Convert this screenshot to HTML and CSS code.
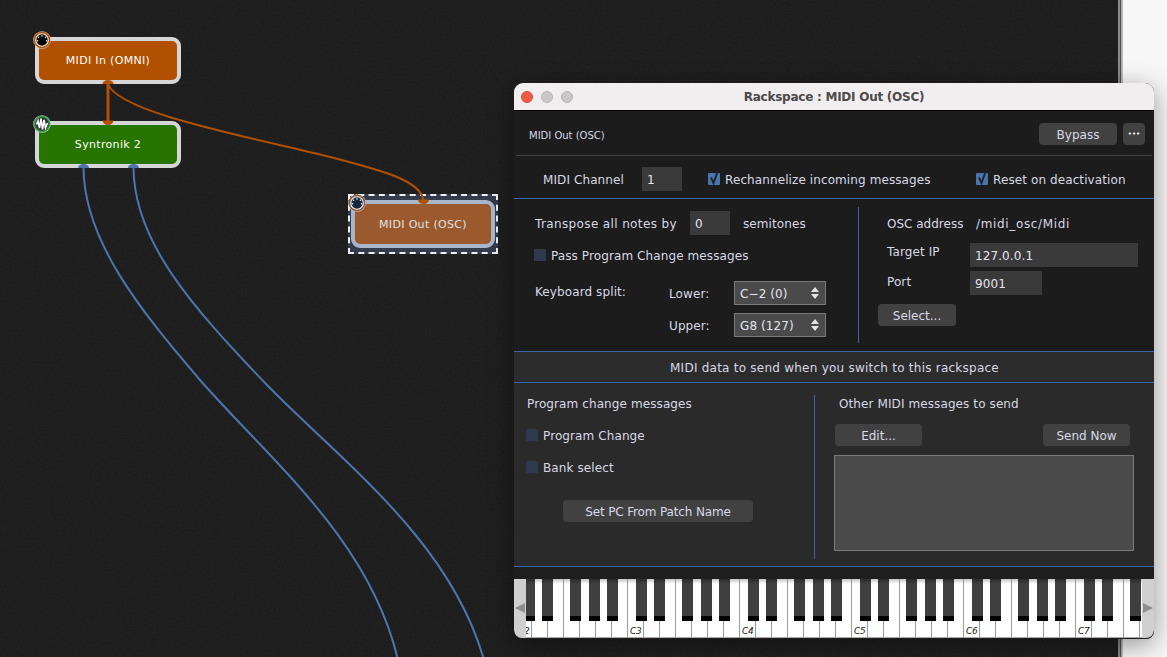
FILE: index.html
```html
<!DOCTYPE html>
<html lang="en">
<head>
<meta charset="utf-8">
<title>Rackspace : MIDI Out (OSC)</title>
<link rel="stylesheet" href="styles.css">
</head>
<body>
<svg class="defs" width="0" height="0" aria-hidden="true">
  <filter id="grain" x="0" y="0" width="100%" height="100%">
    <feTurbulence type="fractalNoise" baseFrequency=".75" numOctaves="2" seed="4"/>
    <feColorMatrix values="0 0 0 0 1  0 0 0 0 1  0 0 0 0 1  1.2 0 0 0 -.5"/>
  </filter>
  <symbol id="midi" viewBox="0 0 18 18">
    <circle cx="9" cy="9" r="8.8" fill="#d0d0d0"/>
    <circle cx="9" cy="9" r="7.6" fill="#f2f2f2" stroke="currentColor" stroke-width="1.500"/>
    <circle cx="9" cy="9" r="5.700" fill="var(--disc, #000)"/>
    <g fill="#fff">
      <circle cx="9" cy="5" r=".8"/><circle cx="5.600" cy="6.300" r=".8"/><circle cx="12.400" cy="6.300" r=".8"/>
      <circle cx="4.500" cy="9.800" r=".8"/><circle cx="13.500" cy="9.800" r=".8"/>
    </g>
  </symbol>
  <symbol id="wave" viewBox="0 0 18 18">
    <circle cx="9" cy="9" r="8.8" fill="#d0d0d0"/>
    <circle cx="9" cy="9" r="7.600" fill="#3b3b3b" stroke="#3a9a4a" stroke-width="1.500"/>
    <path d="M3.500 9.500 5 6 6.500 13 8 3.500 9.500 14.500 11 5 12.500 13 14.500 8" fill="none" stroke="#fff" stroke-width="1.600"/>
  </symbol>
  <symbol id="tick" viewBox="0 0 12 14">
    <rect y="2" width="12" height="12" rx="1" fill="#4a74ab"/>
    <path d="M3 6.500 5.500 12 9.500 1" fill="none" stroke="#20242c" stroke-width="2"/>
  </symbol>
  <symbol id="updown" viewBox="0 0 8 12">
    <path d="M4 0 8 5H0ZM0 7H8L4 12Z" fill="#e4e4e4"/>
  </symbol>
</svg>

<div class="desktop">
  <main class="canvas">
    <svg class="grain" width="1118" height="657" aria-hidden="true"><rect width="1118" height="657" filter="url(#grain)"/></svg>

    <div class="node node-in">
      <svg class="badge badge-orange"><use href="#midi"/></svg>
      MIDI In (OMNI)
    </div>
    <div class="node node-syn">
      <svg class="badge"><use href="#wave"/></svg>
      Syntronik 2
    </div>
    <div class="selection">
      <div class="node node-out">
        <svg class="badge badge-orange badge-selected"><use href="#midi"/></svg>
        MIDI Out (OSC)
      </div>
    </div>

    <svg class="wires" width="1118" height="657" viewBox="0 0 1118 657" aria-hidden="true">
      <g class="wire-blue">
        <path d="M83.500 167C83.500 240 140 310 200 380C270 460 370 540 398 660"/>
        <path d="M133.500 167C133.500 240 190 305 267 385C340 460 450 540 484 660"/>
      </g>
      <g class="port-blue">
        <path d="M78 168a5.500 4 0 0 1 11 0Z"/>
        <path d="M128 168a5.500 4 0 0 1 11 0Z"/>
      </g>
      <g class="wire-orange">
        <path class="thick" d="M108 84V121"/>
        <path d="M108 84C118 112 240 135 330 157C380 170 420 180 423.500 200"/>
      </g>
      <g class="port-orange">
        <path d="M102.500 84a5.500 4 0 0 1 11 0Z"/>
        <path d="M102.500 120.500a5.500 4.500 0 0 0 11 0Z"/>
        <path d="M418 199.500a5.500 4.500 0 0 0 11 0Z"/>
      </g>
    </svg>
  </main>
  <div class="edge"></div>
  <div class="backdrop"></div>

  <section class="window">
    <header class="titlebar">
      <span class="light light-red"></span>
      <span class="light"></span>
      <span class="light"></span>
      <h1 class="title">Rackspace : MIDI Out (OSC)</h1>
    </header>

    <div class="head">
      <span class="plugin-name">MIDI Out (OSC)</span>
      <button class="btn btn-bypass">Bypass</button>
      <button class="btn btn-more">•••</button>
    </div>

    <div class="channel">
      <span class="channel-label">MIDI Channel</span>
      <span class="field field-40">1</span>
      <label class="check check-wide"><svg class="tick"><use href="#tick"/></svg>Rechannelize incoming messages</label>
      <label class="check"><svg class="tick"><use href="#tick"/></svg>Reset on deactivation</label>
    </div>

    <div class="routing">
      <div class="route-left">
        <div class="row">
          <span class="transpose-label">Transpose all notes by</span>
          <span class="field field-40">0</span>
          <span class="semis">semitones</span>
        </div>
        <label class="check check-pass"><span class="box"></span>Pass Program Change messages</label>
        <div class="split">
          <span class="split-label">Keyboard split:</span>
          <span class="split-sub">Lower:</span>
          <span class="select">C−2 (0)<svg class="updown"><use href="#updown"/></svg></span>
          <span class="split-spacer"></span>
          <span class="split-sub">Upper:</span>
          <span class="select">G8 (127)<svg class="updown"><use href="#updown"/></svg></span>
        </div>
      </div>
      <div class="vline"></div>
      <div class="route-right">
        <div class="row">
          <span class="osc-label">OSC address</span>
          <span class="osc-value">/midi_osc/Midi</span>
        </div>
        <div class="row row-ip">
          <span class="ip-label">Target IP</span>
          <span class="field field-ip">127.0.0.1</span>
        </div>
        <div class="row row-port">
          <span class="port-label">Port</span>
          <span class="field field-port">9001</span>
        </div>
        <button class="btn btn-select">Select...</button>
      </div>
    </div>

    <div class="band">MIDI data to send when you switch to this rackspace</div>

    <div class="send">
      <div class="send-left">
        <div class="send-heading">Program change messages</div>
        <label class="check check-send"><span class="box"></span>Program Change</label>
        <label class="check check-send"><span class="box"></span>Bank select</label>
        <button class="btn btn-pc">Set PC From Patch Name</button>
      </div>
      <div class="vline"></div>
      <div class="send-right">
        <div class="send-heading">Other MIDI messages to send</div>
        <div class="send-actions">
          <button class="btn btn-send">Edit...</button>
          <button class="btn btn-send">Send Now</button>
        </div>
        <div class="messages"></div>
      </div>
    </div>

    <div class="strip"></div>

    <div class="keyboard">
      <div class="scroll scroll-left"><span class="tri tri-left"></span></div>
      <div class="keys">
        <div class="octave">
          <i class="w"><b>C2</b></i><i class="w"></i><i class="w"></i><i class="w"></i><i class="w"></i><i class="w"></i><i class="w"></i>
          <s class="k k1"></s><s class="k k2"></s><s class="k k3"></s><s class="k k4"></s><s class="k k5"></s>
        </div>
        <div class="octave">
          <i class="w"><b>C3</b></i><i class="w"></i><i class="w"></i><i class="w"></i><i class="w"></i><i class="w"></i><i class="w"></i>
          <s class="k k1"></s><s class="k k2"></s><s class="k k3"></s><s class="k k4"></s><s class="k k5"></s>
        </div>
        <div class="octave">
          <i class="w"><b>C4</b></i><i class="w"></i><i class="w"></i><i class="w"></i><i class="w"></i><i class="w"></i><i class="w"></i>
          <s class="k k1"></s><s class="k k2"></s><s class="k k3"></s><s class="k k4"></s><s class="k k5"></s>
        </div>
        <div class="octave">
          <i class="w"><b>C5</b></i><i class="w"></i><i class="w"></i><i class="w"></i><i class="w"></i><i class="w"></i><i class="w"></i>
          <s class="k k1"></s><s class="k k2"></s><s class="k k3"></s><s class="k k4"></s><s class="k k5"></s>
        </div>
        <div class="octave">
          <i class="w"><b>C6</b></i><i class="w"></i><i class="w"></i><i class="w"></i><i class="w"></i><i class="w"></i><i class="w"></i>
          <s class="k k1"></s><s class="k k2"></s><s class="k k3"></s><s class="k k4"></s><s class="k k5"></s>
        </div>
        <div class="octave">
          <i class="w"><b>C7</b></i><i class="w"></i><i class="w"></i><i class="w"></i><i class="w"></i><i class="w"></i><i class="w"></i>
          <s class="k k1"></s><s class="k k2"></s><s class="k k3"></s><s class="k k4"></s><s class="k k5"></s>
        </div>
      </div>
      <div class="scroll scroll-right"><span class="tri tri-right"></span></div>
    </div>
  </section>
</div>
</body>
</html>
```

FILE: styles.css
```css
* { box-sizing: border-box; }
html, body { margin: 0; height: 100%; overflow: hidden; }
body {
  font-family: "DejaVu Sans", "Liberation Sans", sans-serif;
  font-size: 12px;
  letter-spacing: .1px;
  color: #d9d9e6;
  background: #f7f7f7;
}
.defs { position: absolute; }
.desktop { position: relative; display: flex; width: 1167px; height: 657px; overflow: hidden; }

/* canvas */
.canvas { position: relative; width: 1118px; height: 657px; background: #1d1d1d; flex: none; }
.edge { width: 5px; flex: none; background: linear-gradient(90deg, #8a8a8a 0, #8a8a8a 40%, #4e4e4e 40%, #4e4e4e 60%, #a8a8a8 60%, #c4c4c4 100%); }
.backdrop { flex: 1; background: #f7f7f7; }
.grain { position: absolute; left: 0; top: 0; opacity: .07; }
.wires { position: absolute; left: 0; top: 0; }
.wires path { fill: none; }
.wire-blue path { stroke: #4e74ac; stroke-width: 2; }
.wire-orange path { stroke: #b15000; stroke-width: 2; }
.wire-orange .thick { stroke-width: 3; }
.wires .port-blue path { fill: #4e74ac; }
.wires .port-orange path { fill: #b15000; }

.node {
  position: absolute;
  display: flex; align-items: center; justify-content: center;
  width: 146px; height: 47px;
  border: 4px solid #d6d6d6; border-radius: 9px;
  color: #fff;
  font-size: 11px;
  letter-spacing: .33px;
}
.node-in { left: 35px; top: 37px; background: #b15000; }
.node-syn { left: 35px; top: 121px; background: #277400; }
.selection {
  position: absolute; left: 348px; top: 194px;
  width: 150px; height: 60px;
  background: #333c4c;
  border: 2px dashed #f0f0f0;
}
.node-out {
  left: 1px; top: 4px; width: 144px; height: 48px;
  background: #9b5a2e; border-color: #a9b5c8; color: #e2e2e2;
}
.badge { position: absolute; left: -6px; top: -10px; width: 18px; height: 18px; }
.badge-orange { color: #b15000; }
.badge-selected { left: -7px; top: -10px; --disc: #14263e; color: #8a5a3a; }

/* window */
.window {
  position: absolute; left: 514px; top: 83px;
  display: flex; flex-direction: column;
  width: 640px; height: 556px;
  border-radius: 9px 9px 8px 8px;
  background: #1c1c1c;
  box-shadow: 0 6px 26px rgba(0,0,0,.4);
  overflow: hidden;
}
.titlebar {
  position: relative;
  display: flex; align-items: center; gap: 8px;
  flex: none; height: 28px; padding: 1px 0 0 7px;
  background: #f0eeee;
  border-bottom: 1px solid #000;
}
.light { width: 12px; height: 12px; border-radius: 50%; background: #c9c7c7; border: 1px solid #b5b3b3; }
.light-red { background: #ee5a46; border-color: #e14a36; }
.title {
  position: absolute; left: 0; right: 0; top: 0;
  margin: 0; text-align: center;
  font-size: 12px; line-height: 29px; font-weight: 700; color: #4c4a4a;
  letter-spacing: -.25px;
}

.head {
  display: flex; align-items: center; flex: none;
  height: 45px; margin: 0 2px; padding: 4px 7px 2px 13px;
  border-bottom: 1px solid #444;
}
.plugin-name { font-size: 10px; margin-right: auto; padding-top: 2px; letter-spacing: 0; }
.btn {
  display: block; height: 22px; padding: 2px 0 0;
  border: 0; border-radius: 4px;
  background: #414141; color: #d9d9e6;
  font: inherit; letter-spacing: 0; text-align: center;
}
.btn-bypass { width: 78px; }
.btn-more { width: 22px; margin-left: 6px; padding: 0; font-size: 7px; color: #fff; }

.field {
  display: flex; align-items: center;
  height: 24px; padding: 2px 0 0 5px;
  background: #3a3a3a; color: #e4e4ee; flex: none;
}
.field-40 { width: 40px; }

.channel {
  display: flex; align-items: center; flex: none;
  height: 43px; padding: 4px 0 0 29px;
  border-bottom: 1px solid #3c65a6;
}
.channel-label { width: 99px; padding-top: 2px; }
.check { display: flex; align-items: center; padding-top: 2px; }
.check-wide { width: 268px; margin-left: 26px; }
.tick { width: 12px; height: 14px; margin: -4px 5px 0 0; flex: none; }
.box {
  width: 12px; height: 12px; margin: -2px 5px 0 0; flex: none;
  border-radius: 1px; background: #2e3a4c;
}

.routing {
  display: grid; grid-template-columns: 344px 1px 1fr; flex: none;
  height: 153px; padding: 8px 0;
  border-bottom: 1px solid #3c65a6;
}
.vline { background: #3c65a6; }
.row { display: flex; align-items: center; min-height: 24px; }
.route-left { padding: 4px 0 0 21px; }
.transpose-label { width: 155px; padding-top: 2px; letter-spacing: .37px; white-space: nowrap; }
.semis { margin-left: 13px; padding-top: 2px; }
.check-pass { height: 24px; margin: 8px 0 14px -1px; }
.split {
  display: grid; grid-template-columns: 134px 65px 92px; grid-auto-rows: 24px;
  row-gap: 8px; align-items: center;
}
.split-label { align-self: start; line-height: 22px; }
.split-sub { padding-top: 2px; }
.select {
  display: flex; align-items: center; justify-content: space-between;
  height: 24px; padding: 2px 6px 0 5px;
  background: #4a4a4a; border: 1px solid #7a7a7a; color: #e4e4ee;
}
.updown { width: 8px; height: 12px; margin-top: -2px; }

.route-right { padding: 4px 0 0 28px; }
.osc-label { width: 89px; padding-top: 2px; letter-spacing: 0; }
.osc-value { padding-top: 2px; letter-spacing: .65px; }
.row-ip { margin-top: 8px; align-items: flex-start; }
.row-port { margin-top: 4px; align-items: flex-start; }
.ip-label { width: 83px; line-height: 18px; }
.port-label { width: 83px; line-height: 22px; }
.field-ip { width: 168px; }
.field-port { width: 72px; }
.btn-select { width: 78px; margin: 9px 0 0 -9px; }

.band {
  flex: none; height: 31px;
  display: flex; align-items: center; justify-content: center;
  padding: 2px 0 0 1px;
  background: #2c2c2c;
  border-bottom: 1px solid #3c65a6;
  letter-spacing: .24px;
}

.send {
  display: grid; grid-template-columns: 300px 1px 1fr; flex: none;
  height: 184px; padding: 12px 0 7px;
  background: #2a2a2a;
  border-bottom: 1px solid #3c65a6;
}
.send-left { padding-left: 13px; }
.send-heading { line-height: 16px; padding-top: 1px; margin-bottom: -1px; }
.check-send { height: 16px; margin: 16px 0 0 -1px; }
.btn-pc { width: 190px; margin: 25px 0 0 36px; letter-spacing: -.15px; }
.send-right { padding-left: 24px; }
.send-actions { display: flex; justify-content: space-between; width: 295px; margin: 13px 0 0 -4px; }
.btn-send { width: 87px; }
.messages {
  width: 300px; height: 96px; margin: 9px 0 0 -5px;
  background: #4a4a4a; border: 1px solid #7a7a7a;
}

.strip { flex: none; height: 12px; background: #1e1e1e; }

.keyboard { display: flex; flex: none; height: 60px; background: #1e1e1e; }
.scroll {
  display: flex; align-items: center; justify-content: center;
  flex: none; width: 12px; height: 59px; background: #cfcfcf;
}
.scroll-left { border-bottom-left-radius: 8px; }
.scroll-right { border-bottom-right-radius: 8px; }
.tri { width: 0; height: 0; border-style: solid; border-color: transparent; margin-bottom: 1px; }
.tri-left { border-width: 5.500px 10px 5.500px 0; border-right-color: #8e8e8e; }
.tri-right { border-width: 5.500px 0 5.500px 10px; border-left-color: #8e8e8e; }
.keys { display: flex; flex: none; width: 616px; height: 59px; overflow: hidden; }
.octave { position: relative; display: flex; flex: none; width: 112px; height: 59px; }
.octave:first-child { margin-left: -11px; }
.w {
  display: block; flex: none; width: 16px; height: 59px; position: relative;
  background: linear-gradient(#c4c4c4 0, #fff 5px);
  border-left: 1px solid #9a9a9a;
  border-bottom: 1px solid #aaa;
}
.w b {
  position: absolute; left: 2px; bottom: 0;
  font-family: "DejaVu Sans", sans-serif; font-size: 9px; font-weight: 400; line-height: 12px; color: #222;
  letter-spacing: -.3px;
}
.k {
  position: absolute; top: 0; display: block; width: 11px; height: 42px;
  background: linear-gradient(#2c2c2c 0, #3f3f3f 5px, #3f3f3f 37px, #000 37px);
}
.k1 { left: 9px; }
.k2 { left: 27px; }
.k3 { left: 55px; }
.k4 { left: 74px; }
.k5 { left: 92px; }
```
